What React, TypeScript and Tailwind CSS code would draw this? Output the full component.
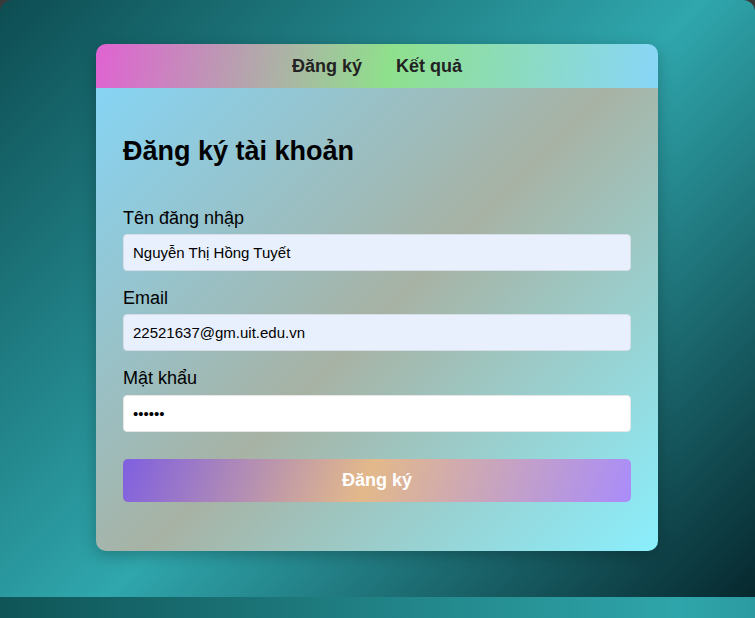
export default function App() {
  return (
    <div className="flex h-[618px] flex-col bg-[#3a3a3a] font-['Liberation_Sans',Arial,sans-serif]">
      <main className="h-[597px] rounded-t-[12px] bg-[linear-gradient(135deg,#0d4d52_0%,#2fa7ad_52%,#06282e_100%)] pt-[44px]">
        <div className="ml-[96px] w-[562px] overflow-hidden rounded-[10px] shadow-[0_4px_16px_rgba(0,0,0,0.25)]">
          <nav className="flex h-[44px] items-center justify-center gap-[34px] bg-[linear-gradient(100deg,#e062d2_0%,#8fe08c_52%,#88d6f8_100%)] text-[18px] font-bold text-[#222]">
            <a className="cursor-pointer">Đăng ký</a>
            <a className="cursor-pointer">Kết quả</a>
          </nav>
          <section className="bg-[linear-gradient(135deg,#86d4f4_0%,#a7b2a4_50%,#8aeffd_100%)] px-[27px] pt-[48px] pb-[49px]">
            <h2 className="mb-[42px] text-[27px] leading-[30px] font-bold text-black">Đăng ký tài khoản</h2>
            <form className="flex flex-col" onSubmit={(e) => e.preventDefault()}>
              <label className="mb-[5px] text-[18px] leading-[21px] text-black">Tên đăng nhập</label>
              <input
                className="h-[37px] rounded-[4px] border border-[#d6dde6] bg-[#e8f0fe] px-[9px] text-[15px] text-black outline-none"
                defaultValue="Nguyễn Thị Hồng Tuyết"
              />
              <label className="mt-[17px] mb-[5px] text-[18px] leading-[21px] text-black">Email</label>
              <input
                className="h-[37px] rounded-[4px] border border-[#d6dde6] bg-[#e8f0fe] px-[9px] text-[15px] text-black outline-none"
                defaultValue="22521637@gm.uit.edu.vn"
              />
              <label className="mt-[17px] mb-[6px] text-[18px] leading-[21px] text-black">Mật khẩu</label>
              <input
                type="password"
                className="h-[37px] rounded-[4px] border border-[#e6e6e6] bg-white px-[9px] text-[15px] text-black outline-none"
                defaultValue="123456"
              />
              <button
                type="submit"
                className="mt-[27px] h-[43px] rounded-[5px] bg-[linear-gradient(110deg,#7f5fe0_0%,#e3b98a_48%,#a98cfa_100%)] text-[18px] font-bold text-white"
              >
                Đăng ký
              </button>
            </form>
          </section>
        </div>
      </main>
      <div className="h-[21px] bg-[linear-gradient(90deg,#0f5557_0%,#2ea5aa_90%,#2b9ba1_100%)]" />
    </div>
  );
}
